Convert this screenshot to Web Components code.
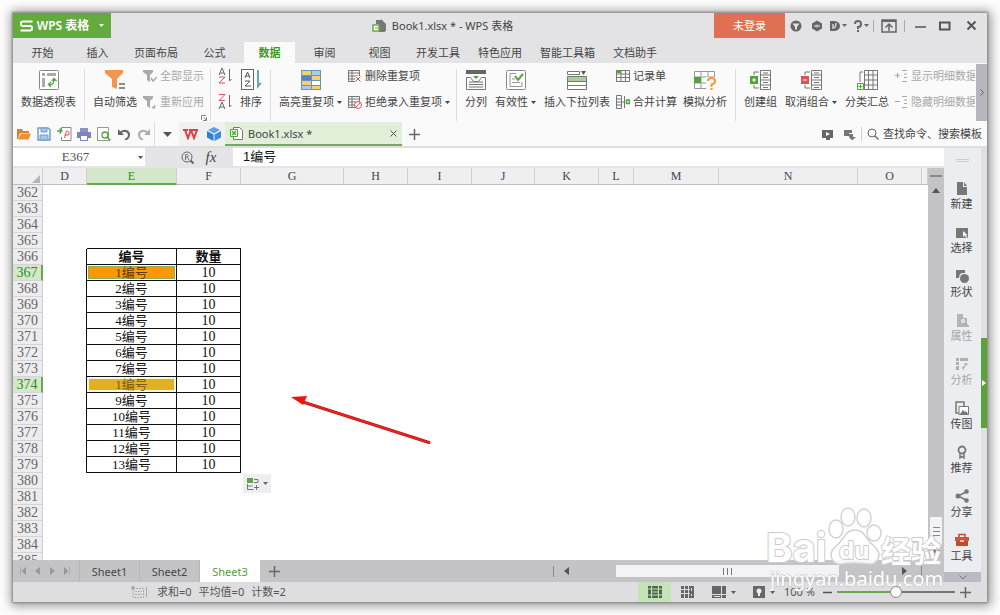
<!DOCTYPE html>
<html lang="zh-CN">
<head>
<meta charset="utf-8">
<title>Book1.xlsx * - WPS 表格</title>
<style>
  html, body { margin: 0; height: 100%; }
  body {
    background: #fdfdfd; box-sizing: border-box; padding: 13px;
    font: 11px/14px "Noto Sans", "Noto Sans CJK SC", sans-serif; color: #444;
  }
</style>
</head>
<body>
<app-window>
  <title-bar></title-bar>
  <menu-tabs></menu-tabs>
  <ribbon-bar></ribbon-bar>
  <quick-bar></quick-bar>
  <work-area>
    <formula-bar></formula-bar>
    <sheet-view></sheet-view>
    <sheet-tabs></sheet-tabs>
    <side-panel slot="side"></side-panel>
  </work-area>
  <status-bar></status-bar>
  <water-mark></water-mark>
</app-window>

<script>
const ICONS = {
  caret: [6, 4, '<path d="M0 0h6L3 4z" fill="currentColor"/>'],
  smallcaret: [5, 3, '<path d="M0 0h5L2.500 3z" fill="currentColor"/>'],
  bigcaret: [9, 5, '<path d="M0 0h9L4.500 5z" fill="currentColor"/>'],
  wps: [13, 12, '<path d="M12.500 1.500H3a2 2 0 0 0 0 4.500h7a2 2 0 0 1 0 4.500H.5" fill="none" stroke="#fff" stroke-width="2"/>'],
  book: [14, 14, '<path d="M4 1h6v4h3v8H7V5H4z" fill="#777"/><path d="M9 0l5 5v7H9z" fill="#777"/><path d="M1 6h6v6H1z" fill="#fff" stroke="#63ab46" stroke-width="1.500"/><path d="M3 9h3" stroke="#63ab46"/>'],
  shirt: [12, 12, '<circle cx="6" cy="6" r="5.500" fill="#666"/><path d="M2.500 3.500h7L7 7v3L5 9V7z" fill="#e3e3e5"/>'],
  gem: [12, 12, '<path d="M6 .5l5 3v5l-5 3-5-3v-5z" fill="#666"/><circle cx="6" cy="6" r="1.800" fill="#999"/><path d="M3 5.500h6v1H3z" fill="#ddd"/>'],
  docer: [10, 12, '<path d="M0 1h5q5 1 5 5t-5 5H0z" fill="#666"/><path d="M3 4v4q3 0 3-5" fill="none" stroke="#e3e3e5" stroke-width="1.300"/>'],
  help: [8, 12, '<path d="M1 4q0-3 3-3t3 3-3 3v2" fill="none" stroke="#666" stroke-width="2"/><path d="M3 10h2v2H3z" fill="#666"/>'],
  ribbonup: [16, 14, '<path d="M1 1h14v12H1z" fill="none" stroke="#666" stroke-width="1.500"/><path d="M1 1h14v2H1z" fill="#666"/><path d="M8 12V5M4.500 8.500L8 5l3.500 3.500" fill="none" stroke="#666" stroke-width="1.500"/>'],
  min: [12, 12, '<path d="M1 7h11" stroke="#555" stroke-width="1.500"/>'],
  max: [12, 10, '<path d="M1 1.500h9.500v7H1z" fill="none" stroke="#555" stroke-width="2"/>'],
  close: [11, 11, '<path d="M1.500 1.500l8 8M9.500 1.500l-8 8" stroke="#555" stroke-width="2"/>'],
  pivot: [20, 20, '<rect x=".5" y=".5" width="19" height="19" rx="1" fill="#fff" stroke="#888"/><path d="M3 3h3v3H3zM8 3h9v3H8zM3 8h3v9H3z" fill="#aaa"/><path d="M10 14.500q5 1 5-5M12 12l-2.500 2.500L12 17M13 11l2-2.500 2.500 2.500" fill="none" stroke="#4ea63a" stroke-width="1.300"/>'],
  filter: [20, 20, '<path d="M0 0h18v3l-6 6v10l-5-2V9L0 3z" fill="#f2954f"/><path d="M14 14h6M14 18h6" stroke="#666" stroke-width="1.500"/>'],
  showall: [14, 14, '<path d="M0 1h10v2L7 6v7l-3-2V6L0 3z" fill="#aaa"/><path d="M8 9l2 3 4-4" fill="none" stroke="#aaa" stroke-width="1.500"/>'],
  reapply: [14, 14, '<path d="M0 1h10v2L7 6v7l-3-2V6L0 3z" fill="#aaa"/><path d="M9 12l2 1 1-3" fill="none" stroke="#aaa" stroke-width="1.500"/>'],
  az: [17, 16, '<path d="M2 7L5 0l3 7M3 5h4" fill="none" stroke="#666"/><path d="M2 9h6L2 15h6" fill="none" stroke="#dc5254"/><path d="M12.500 1v12l2-2" fill="none" stroke="#666"/>'],
  za: [17, 16, '<path d="M2 .5h6L2 6.500h6" fill="none" stroke="#dc5254"/><path d="M2 15L5 8l3 7M3 13h4" fill="none" stroke="#666"/><path d="M12.500 1v12l2-2" fill="none" stroke="#666"/>'],
  sort: [21, 22, '<rect x=".5" y=".5" width="12" height="20" fill="#fff" stroke="#666"/><path d="M4 9l2.500-6L9 9M4.500 7h4M4 12h5l-5 5h6" fill="none" stroke="#555"/><path d="M16 1h2v13h3l-5 6z" fill="#6ba0cd"/>'],
  highlight: [20, 20, '<path d="M0 0h20v20H0z" fill="#6f93b8"/><path d="M1 1h9v4H1zM11 6h8v4h-8zM1 11h9v4H1zM11 16h8v3h-8z" fill="#f6cf72"/><path d="M11 1h8v4h-8zM1 16h9v3H1z" fill="#a9cbee"/><path d="M1 6h9v4H1z" fill="#4f86cc"/><path d="M11 11h8v4h-8z" fill="#fff"/>'],
  dedupe: [14, 14, '<path d="M.5 1.500h11v11H.5zM.5 4h11M.5 7h11M.5 10h11M4 1.500v11" fill="none" stroke="#777"/><path d="M7 7h7v7H7z" fill="#fafafa"/><path d="M7.500 7.500l5 5M12.500 7.500l-5 5" stroke="#dc5254"/>'],
  refuse: [14, 14, '<path d="M.5 1.500h11v11H.5zM.5 4h11M.5 7h11M.5 10h11M4 1.500v11" fill="none" stroke="#777"/><circle cx="10" cy="10" r="3.500" fill="#fff" stroke="#dc5254"/><path d="M7.500 12.500l5-5" stroke="#dc5254"/>'],
  split: [20, 20, '<path d="M0 0h20v4H0z" fill="#666"/><path d="M7 6h6l-3 3z" fill="#4ea63a"/><path d="M.5 7.500h4l3 4h5l3-4h4v12H.5zM3 12h14M3 14.500h14M3 17h14" fill="none" stroke="#777"/>'],
  valid: [20, 20, '<rect x=".5" y=".5" width="19" height="19" rx="1" fill="#fff" stroke="#888"/><path d="M10 3.500H4v13h12V12M6 12.500h8M6 9h3" fill="none" stroke="#999"/><path d="M9 6l3 4 5-6" fill="none" stroke="#4ea63a" stroke-width="2"/>'],
  droplist: [20, 20, '<path d="M.5 1.500h12v3H.5zM.5 6.500h19v13H.5z" fill="#fff" stroke="#777"/><path d="M1 7h18v4H1z" fill="#a9cf99"/><path d="M0 11.500h20M0 15.500h20" stroke="#777"/><path d="M14 1h5l-2.500 4z" fill="#555"/>'],
  record: [14, 14, '<path d="M.5 1.500h13v11H.5zM.5 5h13M.5 8.500h13M5 1.500v11M9.500 1.500v11" fill="none" stroke="#777"/><path d="M0 1h5v3H0z" fill="#4ea63a"/>'],
  merge: [14, 14, '<path d="M.5 .5h5v13h-5zM.5 4h5M.5 7h5M.5 10h5" fill="none" stroke="#777"/><path d="M8.500 1v12M6 7h3" stroke="#777"/><path d="M10.500 5h3v3.500h-3z" fill="none" stroke="#4ea63a" stroke-width="1.500"/>'],
  whatif: [22, 20, '<path d="M.5 1.500h20v17H.5zM.5 7h20M.5 13h20M7 1.500v17M14 1.500v17" fill="#fff" stroke="#999"/><path d="M0 7h7v6H0z" fill="#4ea63a"/><path d="M12 7h10v13H12z" fill="#fafafa"/><path d="M14 11q0-3 3.500-3t3.500 3-3.500 3.500V17M17.500 18v2" fill="none" stroke="#f09a3e" stroke-width="2"/>'],
  group: [21, 20, '<path d="M10.500 .5h10v19h-10zM10.500 5h10M10.500 10h10M10.500 15h10M13 3h5M13 7.500h5M13 12.500h5M13 17.500h5" fill="none" stroke="#777"/><path d="M9 2H4v3M4 15v3h5" fill="none" stroke="#777"/><path d="M0 6h8v8H0z" fill="#4ea63a"/><path d="M2 10h4M4 8v4" stroke="#fff"/>'],
  ungroup: [21, 20, '<path d="M10.500 .5h10v19h-10zM10.500 5h10M10.500 10h10M10.500 15h10M13 3h5M13 7.500h5M13 12.500h5M13 17.500h5" fill="none" stroke="#777"/><path d="M9 2H4v3M4 15v3h5" fill="none" stroke="#777"/><path d="M0 6h8v8H0z" fill="#dc5254"/><path d="M2 10h4" stroke="#fff"/>'],
  subtotal: [21, 20, '<path d="M7.500 .5h13v19h-13zM7.500 5h13M7.500 10h13M7.500 15h13M11.500 .5v19M16 .5v19" fill="none" stroke="#777"/><path d="M6 2H3v10" fill="none" stroke="#777"/><path d="M.5 13.500h6v6h-6z" fill="#fff" stroke="#4ea63a"/><path d="M1.500 16.500h4M3.500 14.500v4" stroke="#4ea63a"/>'],
  showdet: [13, 14, '<path d="M0 6.500h5M2.500 4v5M7 1.500h5M9 5h3M9 8.500h3M7 12.500h5" stroke="#aaa" stroke-width="1.200"/>'],
  hidedet: [13, 14, '<path d="M0 6.500h5M7 1.500h5M9 5h3M9 8.500h3M7 12.500h5" stroke="#aaa" stroke-width="1.200"/>'],
  launcher: [6, 6, '<path d="M.5 5V.5H5M5.500 2v3.500H2M2.500 2.500l3 3" fill="none" stroke="#888"/>'],
  right: [4, 7, '<path d="M.5 .5l3 3-3 3" fill="none" stroke="#666"/>'],
  expand: [4, 6, '<path d="M0 0l4 3-4 3z" fill="#fff"/>'],
  open: [14, 12, '<path d="M0 1h5l1 2h6v2H3L1 11H0z" fill="#d9822a"/><path d="M4 5.500h10L11.500 11.500H1z" fill="#ee8f32"/>'],
  save: [14, 14, '<path d="M1 1h10l2 2v10H1z" fill="#fff" stroke="#6f9fce" stroke-width="1.500"/><path d="M4 1h6v4H4zM3 8h8v5H3z" fill="#a6c5e3" stroke="#6f9fce"/>'],
  pdf: [15, 14, '<path d="M4.500 3V.5H14v13H4.500V10" fill="#fff" stroke="#888"/><path d="M7.500 11l2-7h1q3 1 1 4h-4" fill="none" stroke="#dc5254"/><path d="M0 4h4M2.500 1.500L5 4 2.500 6.500" fill="none" stroke="#4ea63a" stroke-width="1.300"/>'],
  print: [14, 13, '<path d="M3 0h8v4H3z" fill="#8e93c7"/><path d="M0 4h14v6H0z" fill="#7d84bd"/><path d="M3.500 7.500h7v5h-7z" fill="#fff" stroke="#7d84bd"/>'],
  preview: [14, 14, '<path d="M.5 .5h11v13H.5z" fill="#fff" stroke="#999"/><circle cx="8" cy="8" r="3" fill="#fff" stroke="#4ea63a" stroke-width="1.300"/><path d="M10 10l3.500 3.500" stroke="#4ea63a" stroke-width="1.500"/>'],
  undo: [12, 12, '<path d="M2 5q3-3 6-2 3 1 3 4t-4 5" fill="none" stroke="#666" stroke-width="2"/><path d="M0 1v6h6z" fill="#666"/>'],
  redo: [12, 12, '<path d="M10 5q-3-3-6-2-3 1-3 4t4 5" fill="none" stroke="#aaa" stroke-width="2"/><path d="M12 1v6H6z" fill="#aaa"/>'],
  w: [15, 11, '<path d="M0 1h5M6 1h4M10 1h5M2 1l3 8 3-8 3 8 3-8" fill="none" stroke="#dc4044" stroke-width="2"/>'],
  cube: [14, 14, '<path d="M7 0l6 3-6 3.500L1 3z" fill="#5aa2e8"/><path d="M0 4l6.500 3.500V14L0 10.500z" fill="#2f7fd6"/><path d="M14 4L7.500 7.500V14L14 10.500z" fill="#3d8ce0"/>'],
  xls: [13, 13, '<path d="M3.500 .5h6l3 3v9h-9z" fill="#fff" stroke="#777"/><path d="M.5 2.500h7v7h-7z" fill="#fff" stroke="#4ea63a"/><path d="M2 4l4 4M6 4L2 8" stroke="#4ea63a" stroke-width="1.500"/>'],
  x: [7, 7, '<path d="M.5 .5l6 6M6.500 .5l-6 6" stroke="#555"/>'],
  plus: [11, 11, '<path d="M5.500 0v11M0 5.500h11" stroke="#666" stroke-width="1.500"/>'],
  minus: [9, 9, '<path d="M0 4.500h9" stroke="#555" stroke-width="1.500"/>'],
  present: [12, 11, '<path d="M0 1h11v8H0zM4 9h4v2H4z" fill="#666"/><path d="M4 3l4 2-4 2z" fill="#fff"/>'],
  share2: [12, 11, '<path d="M0 1h8v3H5v3H0z" fill="#777"/><path d="M5 5h4v3h3l-4 3.500L5 8z" fill="#777"/>'],
  search: [12, 12, '<circle cx="5" cy="5" r="4" fill="none" stroke="#666"/><path d="M8 8l3.500 3.500" stroke="#666" stroke-width="1.300"/>'],
  find: [13, 13, '<circle cx="6" cy="6" r="5" fill="none" stroke="#666"/><path d="M9.500 9.500l3 3" stroke="#666" stroke-width="2"/><path d="M4.500 9V3.500h2q2 1.500 0 2.500h-2M6 6l2 3" fill="none" stroke="#777"/>'],
  newdoc: [14, 14, '<path d="M2 1h6v5h4v8H2zM9 1l3 4H9z" fill="#777"/>'],
  select: [14, 14, '<path d="M1 3h12v10H1z" fill="#777"/><path d="M8 6v6l1.500-1.500 2 2.500 1-1-2-2h2z" fill="#fff"/>'],
  shapes: [14, 14, '<path d="M1 1h9v3H7q-3 1-3 5H1z" fill="#777"/><circle cx="9.500" cy="9.500" r="4.500" fill="#777"/>'],
  props: [14, 14, '<path d="M2 1h6v4h4v9H2z" fill="#b5b5b7"/><circle cx="8" cy="8" r="3" fill="#ddd" stroke="#aaa"/><path d="M10 10l4 4" stroke="#aaa" stroke-width="1.500"/>'],
  analyse: [14, 14, '<path d="M1 1h3v3H1zM5 1h8v3H5zM1 5h3v3H1zM1 9h3v4H1z" fill="#b0b0b2"/><path d="M7 11q4 0 4-5M9 9l-2 2 2 2M9 8l2-2 2 2" fill="none" stroke="#aaa"/>'],
  image: [14, 14, '<path d="M4 12H1V1h8v4" fill="none" stroke="#777" stroke-width="1.500"/><path d="M4 5.500h9.500v8H4z" fill="#fff" stroke="#777"/><path d="M5 13l3-4 2 2 1-1 2 3z" fill="#777"/>'],
  badge: [14, 14, '<circle cx="7" cy="5" r="3.500" fill="none" stroke="#777" stroke-width="1.800"/><path d="M5 8v5l2-1.500L9 13V8" fill="none" stroke="#777" stroke-width="1.500"/>'],
  share: [14, 14, '<path d="M12 2.500L3 7l9 4.500" fill="none" stroke="#777" stroke-width="1.500"/><circle cx="11.500" cy="2.500" r="2.300" fill="#777"/><circle cx="3" cy="7" r="2.500" fill="#777"/><circle cx="11.500" cy="11.500" r="2.300" fill="#777"/>'],
  tools: [14, 14, '<path d="M4 4V1.500h6V4" fill="none" stroke="#b94b34" stroke-width="1.500"/><path d="M0 4h14v4H0z" fill="#c9573d"/><path d="M1 8h12v5H1z" fill="#c04a32"/><path d="M5 7h4v2H5z" fill="#f3c08d"/>'],
  down: [8, 5, '<path d="M.5 .5L4 4 7.500 .5" fill="none" stroke="#777"/>'],
  triup: [8, 5, '<path d="M0 5h8L4 0z" fill="#555"/>'],
  tridown: [8, 5, '<path d="M0 0h8L4 5z" fill="#555"/>'],
  trileft: [5, 8, '<path d="M5 0v8L0 4z" fill="currentColor"/>'],
  triright: [5, 8, '<path d="M0 0v8l5-4z" fill="currentColor"/>'],
  first: [6, 8, '<path d="M.5 0v8M6 0v8L2 4z" fill="currentColor" stroke="currentColor" stroke-width=".5"/>'],
  last: [6, 8, '<path d="M5.500 0v8M0 0v8l4-4z" fill="currentColor" stroke="currentColor" stroke-width=".5"/>'],
  paste: [12, 12, '<path d="M0 0h6v5H0z" fill="#5aa947"/><path d="M7 1.500h4v3H7M.5 6v5.500h6M.5 8h5M9.500 7v5M7 9.500h5" fill="none" stroke="#777"/>'],
  macro: [13, 12, '<path d="M2 2.500h10.500v9H2zM4 5.500h7M4 8.500h7" fill="none" stroke="#aaa" stroke-dasharray="2 1"/><circle cx="2" cy="2" r="2" fill="#aaa"/>'],
  normal: [14, 12, '<path d="M0 0h14v12H0z" fill="#4f6650"/><path d="M0 3h14M0 9h14M3.500 0v12M10.500 0v12M3 6h8" stroke="#c4e2b8"/>'],
  pages: [14, 12, '<path d="M0 0h13v12H0z" fill="#666"/><path d="M0 3.500h9M0 7.500h9M3.500 0v12M7.500 0v12M10.500 2v3M10.500 8v2" stroke="#dedee0"/>'],
  freeze: [14, 12, '<path d="M0 0h9v8H0zM10 0h4v8h-4zM0 9h9v3H0zM10 9h4v3h-4z" fill="#666"/><path d="M2 10.500h6" stroke="#dedee0"/>'],
  eye: [12, 12, '<path d="M0 0h12v12H0z" fill="#666"/><circle cx="6" cy="5" r="2.500" fill="#eee"/><path d="M5 7h2v3H5z" fill="#eee"/>'],
  corner: [8, 8, '<path d="M8 0v8H0z" fill="#b5b5b7"/>']
};

const RESET = `
  :host, *, *::before, *::after { box-sizing: border-box; }
  button, input { font: inherit; color: inherit; margin: 0; padding: 0; border: 0; background: none; outline: 0; }
  button { display: flex; align-items: center; justify-content: center; white-space: nowrap; cursor: pointer; }
  a { color: inherit; text-decoration: none; }
`;

/* Shared base: each element clones its own template into an open shadow root. */
class UiElement extends HTMLElement {
  connectedCallback() {
    if (this.shadowRoot) return;
    const t = document.createElement('template');
    t.innerHTML = `<style>${RESET}${this.css()}</style>${this.html()}`;
    this.attachShadow({ mode: 'open' }).appendChild(t.content.cloneNode(true));
  }
  css() { return ':host{display:block}'; }
  html() { return '<slot></slot>'; }
}
const icon = n => `<ui-icon name="${n}"></ui-icon>`;
const define = (name, css, html) => customElements.define(name, class extends UiElement {
  css() { return css; }
  html() { return typeof html === 'function' ? html(this) : html; }
});

define('ui-icon', ':host{display:block;flex:none} svg{display:block}', el => {
  const [w, h, body] = ICONS[el.getAttribute('name')];
  return `<svg width="${w}" height="${h}" viewBox="0 0 ${w} ${h}" aria-hidden="true">${body}</svg>`;
});

define('app-window', `
  :host { display: flex; flex-direction: column; position: relative; height: 100%; min-width: 0;
    background: #fafafa; box-shadow: 0 0 2px 1px #888, 1px 1px 10px 3px #999; }
`, '<slot></slot>');

define('title-bar', `
  :host { display: flex; align-items: stretch; height: 25px; flex: none; background: #e3e3e5; }
  .brand { background: #63ab3c; color: #fff; font-weight: 600; width: 98px; gap: 4px; }
  .brand span { font-size: 12px; font-weight: 600; margin-right: 6px; }
  h1 { flex: 1; margin: 0; padding-left: 60px; font-size: 11px; font-weight: 400; display: flex; align-items: center; justify-content: center; gap: 6px; white-space: pre; }
  .login { background: #df7152; color: #fff; width: 71px; }
  .tools { display: flex; width: 202px; align-items: center; color: #666; }
  .tools button { height: 25px; width: 21px; gap: 2px; }
  .tools .wide { width: 23px; }
  .tools .ctl { width: 30px; }
  .tools .mid { width: 20px; }
  .tools .end { flex: 1; }
  hr { width: 1px; height: 12px; border: 0; margin: 0; background: #aaa; }
`, `<button class="brand">${icon('wps')}<span>WPS 表格</span>${icon('smallcaret')}</button>
  <h1>${icon('book')}<span>Book1.xlsx * - WPS 表格</span></h1>
  <button class="login">未登录</button>
  <div class="tools">
    <button aria-label="皮肤">${icon('shirt')}</button><button aria-label="设置">${icon('gem')}</button>
    <button class="wide" aria-label="稻壳">${icon('docer')}${icon('smallcaret')}</button>
    <button class="wide" aria-label="帮助">${icon('help')}${icon('smallcaret')}</button>
    <hr><button class="ctl" aria-label="收起">${icon('ribbonup')}</button><hr>
    <button class="ctl" aria-label="最小化">${icon('min')}</button>
    <button class="mid" aria-label="最大化">${icon('max')}</button>
    <button class="end" aria-label="关闭">${icon('close')}</button>
  </div>`);

define('menu-tabs', `
  :host { display: block; flex: none; background: #e3e3e5; }
  nav { display: flex; height: 25px; padding: 4px 0 0 2px; align-items: stretch; }
  a { display: flex; align-items: center; justify-content: center; min-width: 55px; padding: 0 9px; white-space: nowrap; }
  a[aria-current] { min-width: 51px; margin: 0 2px; background: #fafafa; color: #3f9a1e; font-weight: 700; }
`, () => '<nav>' + ['开始','插入','页面布局','公式','数据','审阅','视图','开发工具','特色应用','智能工具箱','文档助手']
  .map(t => `<a href="#"${t === '数据' ? ' aria-current="page"' : ''}>${t}</a>`).join('') + '</nav>');

define('ribbon-group', `
  :host { display: flex; flex: none; position: relative; padding: 0 4px; border-right: 1px solid #dcdcde; height: 52px; }
  :host([last]) { border: 0; }
  .launch { position: absolute; right: 3px; bottom: 0; }
`, el => `<slot></slot>${el.hasAttribute('launcher') ? `<button class="launch" aria-label="更多">${icon('launcher')}</button>` : ''}`);

define('ribbon-tool', `
  :host { display: block; flex: none; }
  button { flex-direction: column; gap: 5px; padding: 1px 4px 0; }
  .pic { height: 20px; display: flex; align-items: center; }
  .label { display: flex; align-items: center; gap: 3px; }
`, el => `<button><span class="pic">${icon(el.getAttribute('icon'))}</span>
  <span class="label"><slot></slot>${el.hasAttribute('menu') ? icon('smallcaret') : ''}</span></button>`);

define('ribbon-pair', `:host { display: flex; flex: none; flex-direction: column; gap: 12px; padding: 0 2px; }`, '<slot></slot>');

define('ribbon-item', `
  :host { display: block; }
  :host([disabled]) { color: #a8a8a8; }
  button { height: 14px; gap: 3px; }
`, el => `<button>${icon(el.getAttribute('icon'))}<slot></slot>${el.hasAttribute('menu') ? icon('smallcaret') : ''}</button>`);

define('ribbon-bar', `
  :host { display: flex; height: 58px; flex: none; background: #fafafa; }
  .tools { flex: 1; min-width: 0; overflow: hidden; display: flex; padding-top: 6px; margin-right: 1px; }
  .more { width: 11px; flex: none; margin-top: 1px; background: #b5b6be; }
`, `<div class="tools">
  <ribbon-group><ribbon-tool icon="pivot">数据透视表</ribbon-tool></ribbon-group>
  <ribbon-group launcher><ribbon-tool icon="filter">自动筛选</ribbon-tool>
    <ribbon-pair><ribbon-item icon="showall" disabled>全部显示</ribbon-item><ribbon-item icon="reapply" disabled>重新应用</ribbon-item></ribbon-pair></ribbon-group>
  <ribbon-group><ribbon-pair><ribbon-item icon="az"></ribbon-item><ribbon-item icon="za"></ribbon-item></ribbon-pair>
    <ribbon-tool icon="sort">排序</ribbon-tool></ribbon-group>
  <ribbon-group><ribbon-tool icon="highlight" menu>高亮重复项</ribbon-tool>
    <ribbon-pair><ribbon-item icon="dedupe">删除重复项</ribbon-item><ribbon-item icon="refuse" menu>拒绝录入重复项</ribbon-item></ribbon-pair></ribbon-group>
  <ribbon-group><ribbon-tool icon="split">分列</ribbon-tool><ribbon-tool icon="valid" menu>有效性</ribbon-tool><ribbon-tool icon="droplist">插入下拉列表</ribbon-tool>
    <ribbon-pair><ribbon-item icon="record">记录单</ribbon-item><ribbon-item icon="merge">合并计算</ribbon-item></ribbon-pair>
    <ribbon-tool icon="whatif">模拟分析</ribbon-tool></ribbon-group>
  <ribbon-group last><ribbon-tool icon="group">创建组</ribbon-tool><ribbon-tool icon="ungroup" menu>取消组合</ribbon-tool><ribbon-tool icon="subtotal">分类汇总</ribbon-tool>
    <ribbon-pair><ribbon-item icon="showdet" disabled>显示明细数据</ribbon-item><ribbon-item icon="hidedet" disabled>隐藏明细数据</ribbon-item></ribbon-pair></ribbon-group>
  </div><button class="more" aria-label="更多工具">${icon('right')}</button>`);

define('quick-bar', `
  :host { display: flex; align-items: stretch; height: 27px; flex: none; background: #fafafa; border-bottom: 2px solid #dedee1; padding-top: 1px; }
  .qat { display: flex; padding-left: 1px; }
  .qat button { width: 20px; }
  .qat .more { width: 25px; color: #555; border-left: 1px solid #dcdcde; }
  .apps { display: flex; background: #f1f1f1; }
  .apps button { width: 23px; }
  .tab { display: flex; align-items: center; gap: 5px; width: 177px; padding: 1px 5px 0; background: #e1eed8; border-bottom: 2px solid #74a95b; }
  .tab a { flex: 1; }
  .add { width: 24px; }
  .right { margin-left: auto; display: flex; align-items: center; padding-right: 2px; }
  .right button { width: 22px; }
  label { display: flex; align-items: center; gap: 4px; border-left: 1px solid #d0d0d0; padding-left: 5px; }
  input { width: 102px; color: #444; }
  input::placeholder { color: #444; opacity: 1; }
`, () => `<div class="qat">${[['open','打开'],['save','保存'],['pdf','输出'],['print','打印'],['preview','预览'],['undo','撤销'],['redo','恢复']]
    .map(([i, l]) => `<button aria-label="${l}">${icon(i)}</button>`).join('')}<button class="more" aria-label="自定义">${icon('bigcaret')}</button></div>
  <div class="apps"><button aria-label="首页">${icon('w')}</button><button aria-label="应用">${icon('cube')}</button></div>
  <div class="tab">${icon('xls')}<a href="#">Book1.xlsx *</a><button aria-label="关闭标签">${icon('x')}</button></div>
  <button class="add" aria-label="新标签">${icon('plus')}</button>
  <div class="right"><button aria-label="放映">${icon('present')}</button><button aria-label="转发">${icon('share2')}</button>
  <label>${icon('search')}<input type="text" aria-label="搜索" placeholder="查找命令、搜索模板"></label></div>`);

define('work-area', `
  :host { display: flex; flex: 1; min-height: 0; }
  main { flex: 1; min-width: 0; display: flex; flex-direction: column; }
`, '<main><slot></slot></main><slot name="side"></slot>');

define('formula-bar', `
  :host { display: flex; flex: none; height: 20px; background: #e5e5e8; padding-bottom: 2px; }
  .name { display: flex; width: 132px; background: #fff; padding-right: 2px; color: #555; }
  .name input { flex: 1; min-width: 0; text-align: center; font: 13px/18px "Liberation Serif", serif; }
  .fx { display: flex; width: 88px; align-items: center; justify-content: flex-end; gap: 4px; padding-right: 12px; }
  .fx button { width: 20px; }
  .fx i { font: italic 15px/16px "Liberation Serif", serif; }
  .val { flex: 1; min-width: 0; background: #fff; padding-left: 10px; font: 13px/18px "Liberation Sans", "Noto Sans CJK SC", sans-serif; color: #111; }
`, `<div class="name"><input type="text" value="E367" aria-label="名称框"><button aria-label="名称列表">${icon('smallcaret')}</button></div>
  <div class="fx"><button aria-label="查找函数">${icon('find')}</button><button aria-label="插入函数"><i>fx</i></button></div>
  <input class="val" type="text" value="1编号" aria-label="编辑栏">`);

const COLS = [['D',44],['E',90],['F',64],['G',103],['H',64],['I',64],['J',63],['K',64],['L',35],['M',85],['N',139],['O',64]];
define('sheet-view', `
  :host { display: flex; flex: 1; min-height: 0; background: #fff; }
  .view { flex: 1; min-width: 0; overflow: hidden; position: relative; }
  table { table-layout: fixed; width: 100%; border-spacing: 0; font: 14px/15px "Liberation Serif", "Noto Sans CJK SC", serif; }
  th, td { padding: 0; height: 16px; text-align: center; font-weight: 400; white-space: nowrap; overflow: hidden; line-height: 15px; }
  thead th { height: 17px; padding-top: 1px; font-size: 12px; background: #efeff1; border-right: 1px solid #cfcfd1; border-bottom: 1px solid #bdbdbf; }
  thead th ui-icon { float: right; margin: 4px 2px 0 0; }
  tbody th { background: #ededef; color: #666; border-right: 1px solid #cfcfd1; border-bottom: 1px solid #d5d5d7; }
  thead th.on { background: #d3e7ca; color: #2f8f1c; border-bottom: 2px solid #6aa84f; line-height: 14px; }
  tbody th.on { background: #d3e7ca; color: #2f8f1c; border-right: 2px solid #6aa84f; }
  td.e, td.f { border-right: 1px solid #111; border-bottom: 1px solid #111; color: #111; }
  td.e { font-size: 13px; }
  td.head { font-size: 13px; font-weight: 700; }
  td.top { border-bottom: 1px solid #111; }
  td.left { border-right: 1px solid #111; }
  td.hot { background: #ff9800; color: #5a3b00; box-shadow: inset 0 0 0 1px #fff, inset 0 0 0 2px #8fae5a; }
  td.warm { background: #e3b022; color: #7a5d10; box-shadow: inset 0 0 0 2px #fff6dc; }
  .opts { position: absolute; left: 230px; top: 306px; width: 28px; height: 19px; background: #eeeef0; gap: 4px; color: #666; }
  .arrow { position: absolute; left: 276px; top: 226px; }
  .scroll { width: 16px; flex: none; background: #c4c4c7; display: flex; flex-direction: column; align-items: center; }
  .scroll hr { width: 12px; height: 2px; border: 0; margin: 7px 0 10px; background: #8a8a8d; }
  .track { flex: 1; display: flex; flex-direction: column; justify-content: flex-end; padding: 4px 0; }
  .thumb { width: 12px; height: 28px; background: #f3f3f5; display: flex; flex-direction: column; gap: 3px; align-items: center; justify-content: center; }
  .thumb i { width: 7px; height: 1px; background: #888; }
  .scroll > button { height: 6px; }
  .scroll > button:last-child { margin-bottom: 5px; }
`, () => {
  let rows = '';
  for (let r = 362; r <= 385; r++) {
    const on = r === 367 || r === 374;
    const data = r >= 366 && r <= 379;
    const n = r === 374 ? 1 : r - 366;
    const e = r === 366 ? '编号' : n + '编号', f = r === 366 ? '数量' : '10';
    const head = r === 366 ? ' head' : '';
    const tone = r === 367 ? ' hot' : r === 374 ? ' warm' : '';
    rows += `<tr><th scope="row"${on ? ' class="on"' : ''}>${r}</th>` +
      (data ? `<td class="left"></td><td class="e${head}${tone}">${e}</td><td class="f${head}">${f}</td>`
            : r === 365 ? '<td></td><td class="top"></td><td class="top"></td>' : '<td></td><td></td><td></td>') +
      '<td></td>'.repeat(COLS.length - 2) + '</tr>';
  }
  return `<div class="view"><table><colgroup><col style="width:30px">${COLS.map(c => `<col style="width:${c[1]}px">`).join('')}<col></colgroup>
    <thead><tr><th>${icon('corner')}</th>${COLS.map(c => `<th scope="col"${c[0] === 'E' ? ' class="on"' : ''}>${c[0]}</th>`).join('')}<th></th></tr></thead>
    <tbody>${rows}</tbody></table>
    <button class="opts" aria-label="粘贴选项">${icon('paste')}${icon('smallcaret')}</button>
    <svg class="arrow" width="144" height="52" viewBox="0 0 144 52" aria-hidden="true"><path d="M14 8L140 48.500" stroke="#a51c1c" stroke-width="3" stroke-linecap="round"/><path d="M14 8L140 48.500" stroke="#e8221c" stroke-width="2" stroke-linecap="round"/><path d="M2 3l16-1-4 9z" fill="#f01212"/></svg></div>
    <div class="scroll"><hr><button aria-label="向上">${icon('triup')}</button><div class="track"><div class="thumb"><i></i><i></i><i></i></div></div><button aria-label="向下">${icon('tridown')}</button></div>`;
});

define('side-panel', `
  :host { display: flex; flex: none; width: 43px; background: #ecedf0; }
  .items { width: 37px; display: flex; flex-direction: column; align-items: stretch; }
  .grip { height: 24px; flex: none; display: flex; align-items: center; justify-content: center; }
  .grip i { width: 13px; height: 3px; border: solid #cfcfd2; border-width: 1px 0; }
  .list { flex: 1; min-height: 0; overflow: hidden; }
  .list button { flex-direction: column; justify-content: flex-start; width: 100%; height: 44px; padding: 9px 2px 0 0; gap: 2px; }
  .list button:disabled { color: #a5a5a7; }
  .down { height: 10px; flex: none; background: #b9bac2; }
  .edge { width: 6px; background: #e0e0e3; display: flex; flex-direction: column; padding-top: 190px; }
  .edge button { height: 90px; width: 6px; background: #5aa33a; }
`, () => `<div class="items"><div class="grip"><i></i></div><div class="list">${
  [['newdoc','新建'],['select','选择'],['shapes','形状'],['props','属性',1],['analyse','分析',1],['image','传图'],['badge','推荐'],['share','分享'],['tools','工具']]
  .map(([i, t, off]) => `<button${off ? ' disabled' : ''}>${icon(i)}<span>${t}</span></button>`).join('')
  }</div><button class="down" aria-label="更多">${icon('down')}</button></div>
  <div class="edge"><button aria-label="展开">${icon('expand')}</button></div>`);

define('sheet-tabs', `
  :host { display: flex; flex: none; height: 22px; background: #c4c4c7; color: #444; }
  .nav { display: flex; width: 67px; align-items: center; justify-content: space-between; padding: 0 9px 0 7px; color: #98989b; border-right: 1px solid #b8b8bb; }
  .tab { width: 60px; display: flex; align-items: center; justify-content: center; padding-top: 2px; border-right: 1px solid #b8b8bb; }
  .tab[aria-current] { background: #fff; color: #55a03a; border: 0; }
  .add { width: 28px; }
  .scroll { display: flex; width: 391px; margin-left: auto; align-items: center; color: #555; }
  .bar { width: 1px; height: 11px; background: #888; }
  .track { flex: 1; padding: 0 63px 0 47px; }
  .thumb { height: 12px; background: #f3f3f5; display: flex; gap: 3px; align-items: center; justify-content: center; }
  .thumb i { width: 1px; height: 7px; background: #777; }
  .prev { margin-left: 10px; } .next { margin-right: 14px; }
  .bar:last-child { margin-right: 22px; }
`, `<div class="nav"><button aria-label="首个">${icon('first')}</button><button aria-label="上一个">${icon('trileft')}</button><button aria-label="下一个">${icon('triright')}</button><button aria-label="末个">${icon('last')}</button></div>
  <a class="tab" href="#">Sheet1</a><a class="tab" href="#">Sheet2</a><a class="tab" href="#" aria-current="page">Sheet3</a>
  <button class="add" aria-label="新建工作表">${icon('plus')}</button>
  <div class="scroll"><span class="bar"></span><button class="prev" aria-label="向左">${icon('trileft')}</button>
  <div class="track"><div class="thumb"><i></i><i></i><i></i></div></div>
  <button class="next" aria-label="向右">${icon('triright')}</button><span class="bar"></span></div>`);

define('status-bar', `
  :host { display: flex; flex: none; height: 20px; align-items: stretch; background: #dedee0; color: #555; }
  .stats { display: flex; align-items: center; gap: 7px; padding-left: 118px; white-space: nowrap; }
  .stats hr { width: 1px; height: 10px; border: 0; margin: 0 3px 0 -5px; background: #aaa; }
  .views { margin-left: auto; display: flex; }
  .views button { width: 33px; gap: 5px; }
  .views .drop { width: 40px; }
  .views .on { background: #c5e3b8; }
  .zoom { display: flex; align-items: center; gap: 5px; padding-right: 16px; }
  .zoom output { width: 34px; white-space: nowrap; }
  input[type=range] { appearance: none; width: 118px; height: 14px;
    background: linear-gradient(90deg, #6aa84f 50%, #777 50%) center / 100% 2px no-repeat; }
  input::-webkit-slider-thumb { appearance: none; width: 12px; height: 12px; border-radius: 6px; background: #fafafa; border: 1px solid #888; }
`, `<div class="stats">${icon('macro')}<hr><span>求和=0</span><span>平均值=0</span><span>计数=2</span></div>
  <div class="views"><button class="on" aria-label="普通视图">${icon('normal')}</button><button aria-label="分页预览">${icon('pages')}</button>
  <button class="drop" aria-label="冻结">${icon('freeze')}${icon('smallcaret')}</button><button class="drop" aria-label="护眼">${icon('eye')}${icon('smallcaret')}</button></div>
  <div class="zoom"><output>100 %</output><button aria-label="缩小">${icon('minus')}</button>
  <input type="range" min="0" max="100" value="50" aria-label="显示比例"><button aria-label="放大">${icon('plus')}</button></div>`);

define('water-mark', `
  :host { display: block; position: absolute; right: 38px; bottom: 10px; width: 184px; height: 86px; pointer-events: none; }
  svg { display: block; }
`, `<svg width="184" height="86" viewBox="0 0 184 86">
  <g fill="#fff" fill-opacity=".85" stroke="#d2d2d4" stroke-width="1.500">
    <ellipse cx="71" cy="23" rx="7" ry="9"/><ellipse cx="83" cy="11" rx="7" ry="9"/><ellipse cx="99" cy="12" rx="7" ry="9"/><ellipse cx="109" cy="27" rx="7" ry="8"/>
    <path d="M90 24q7 0 11 7 4 6 9 10 6 6 3 12-3 6-10 5-13-2-26 0-7 1-10-5-3-6 3-12 5-4 9-10 4-7 11-7z"/>
  </g>
  <g fill="#fff" stroke="#cbcbcd" stroke-width="2" stroke-linejoin="round" paint-order="stroke" font-family="Inter, 'Noto Sans CJK SC', sans-serif" font-weight="700">
    <text x="1" y="56" font-size="40">Bai</text><text x="74" y="53" font-size="24">du</text>
    <text x="116" y="56" font-size="30" font-family="'Noto Sans CJK SC', sans-serif">经验</text>
  </g>
  <text x="5" y="80" font-size="20" font-family="'Noto Sans', sans-serif" fill="#fff" stroke="#bcbcbe" stroke-width="1" paint-order="stroke">jingyan.baidu.com</text>
</svg>`);
</script>
</body>
</html>
